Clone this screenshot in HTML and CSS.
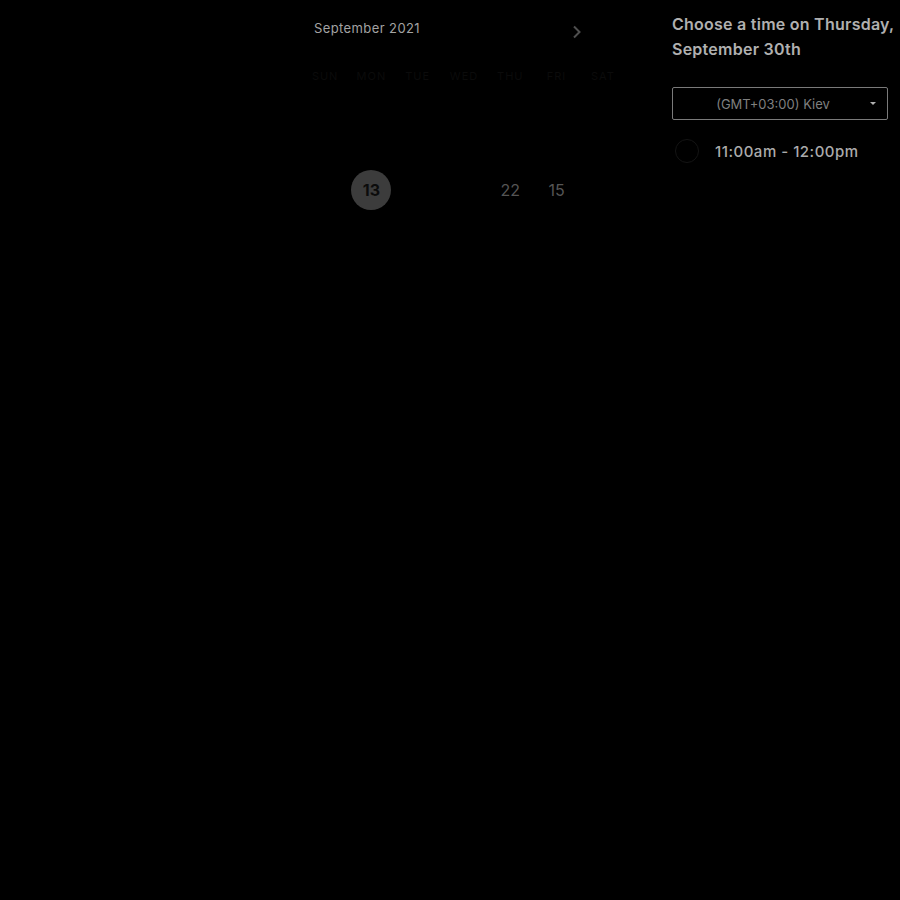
FILE: index.html
```html
<!DOCTYPE html>
<html lang="en">
<head>
<meta charset="utf-8">
<title>Choose a time</title>
<link rel="stylesheet" href="styles.css">
</head>
<body>
<div class="page">
  <section class="calendar">
    <div class="cal-head">
      <span class="month">September 2021</span>
      <svg class="chev" width="10" height="14" viewBox="0 0 10 14"><path d="M2 1.5 L7.5 7 L2 12.5" fill="none" stroke="#4f4f4f" stroke-width="2"/></svg>
    </div>
    <div class="grid weekdays">
      <span>SUN</span><span>MON</span><span>TUE</span><span>WED</span><span>THU</span><span>FRI</span><span>SAT</span>
    </div>
    <div class="grid days">
      <span></span><span></span><span></span><span></span><span></span><span></span><span></span>
      <span></span><span class="day selected">13</span><span></span><span></span><span class="day">22</span><span class="day">15</span><span></span>
    </div>
  </section>
  <section class="times">
    <h2 class="title">Choose a time on Thursday, September 30th</h2>
    <div class="select">
      <span class="select-text">(GMT+03:00) Kiev</span>
      <span class="caret"></span>
    </div>
    <div class="slot">
      <span class="radio"></span>
      <span class="slot-text">11:00am - 12:00pm</span>
    </div>
  </section>
</div>
</body>
</html>
```
FILE: styles.css
```css
html, body {
  margin: 0;
  padding: 0;
  background: #000;
  width: 900px;
  height: 900px;
  overflow: hidden;
  font-family: Inter, "Noto Sans", sans-serif;
}
.page {
  display: flex;
  padding-left: 302px;
}
.calendar {
  width: 324px;
  padding-top: 17px;
}
.cal-head {
  display: flex;
  align-items: center;
  justify-content: space-between;
  padding-left: 12px;
  padding-right: 44px;
  height: 22px;
}
.month {
  font-size: 13px;
  color: #a3a3a3;
  letter-spacing: 0.4px;
}
.chev {
  margin-top: 8px;
}
.grid {
  display: grid;
  grid-template-columns: repeat(7, 1fr);
}
.weekdays {
  margin-top: 26px;
  height: 22px;
  align-items: center;
}
.weekdays span {
  text-align: center;
  font-size: 11px;
  color: #0b0b0b;
  letter-spacing: 1px;
}
.days {
  grid-auto-rows: 46px;
  margin-top: 34px;
}
.days span {
  display: flex;
  align-items: center;
  justify-content: center;
}
.day {
  font-size: 16px;
  color: #555;
}
.day.selected {
  width: 40px;
  height: 40px;
  border-radius: 50%;
  background: #3c3c3c;
  color: #0c0c0c;
  font-weight: 700;
  justify-self: center;
  align-self: center;
}
.times {
  margin-left: 46px;
  width: 216px;
  padding-top: 12px;
}
.title {
  margin: 0;
  font-size: 16px;
  font-weight: 600;
  line-height: 25px;
  color: #b0b0b0;
  letter-spacing: 0.25px;
  width: 240px;
}
.select {
  margin-top: 25px;
  height: 31px;
  border: 1px solid #7a7a7a;
  border-radius: 2px;
  display: flex;
  align-items: center;
  justify-content: center;
  position: relative;
}
.select-text {
  font-size: 13px;
  color: #7f7f7f;
  margin-left: -14px;
}
.caret {
  position: absolute;
  right: 11px;
  top: 14px;
  width: 0;
  height: 0;
  border-left: 3px solid transparent;
  border-right: 3px solid transparent;
  border-top: 3px solid #b0b0b0;
}
.slot {
  display: flex;
  align-items: center;
  margin-top: 18px;
  height: 26px;
}
.radio {
  width: 22px;
  height: 22px;
  border: 1px solid #141414;
  border-radius: 50%;
  margin-left: 3px;
}
.slot-text {
  margin-left: 16px;
  font-size: 15px;
  font-weight: 500;
  color: #ababab;
  letter-spacing: 0.5px;
}
```
